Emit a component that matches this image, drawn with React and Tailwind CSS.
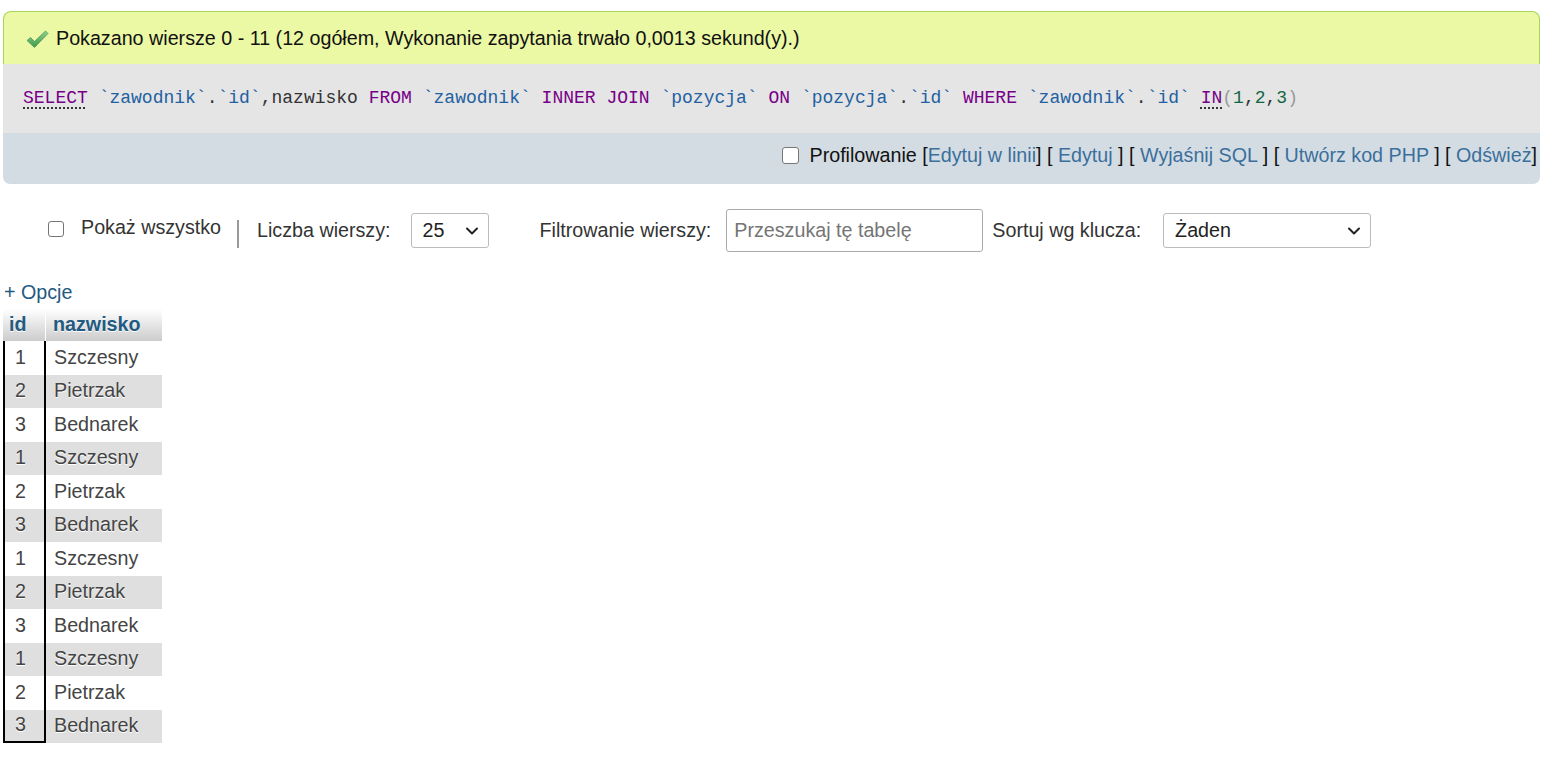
import React from "react";

const SANS = { fontFamily: '"Liberation Sans", Arial, sans-serif' };

function Check() {
  return (
    <svg width="23" height="20" viewBox="0 0 23 20" className="shrink-0">
      <defs>
        <linearGradient id="cg" x1="0" y1="0" x2="0" y2="1">
          <stop offset="0" stopColor="#8fd18f" />
          <stop offset="1" stopColor="#3e9a4a" />
        </linearGradient>
      </defs>
      <path d="M1 11.5 L4.5 8.5 L8.5 12.5 L19.5 2 L22 4.5 L8.5 18.5 Z" fill="url(#cg)" stroke="#4f9a55" strokeWidth="0.8" strokeLinejoin="round" />
    </svg>
  );
}

function Chevron() {
  return (
    <svg width="14" height="10" viewBox="0 0 14 10">
      <path d="M2 2.5 L7 7.5 L12 2.5" fill="none" stroke="#222" strokeWidth="2" strokeLinecap="round" strokeLinejoin="round" />
    </svg>
  );
}

const K = ({ children, u }) => (
  <span className={"text-[#770088]" + (u ? " underline decoration-dotted decoration-[#222] underline-offset-[5px]" : "")}>{children}</span>
);
const N = ({ children }) => <span className="text-[#2261a1]">{children}</span>;
const P = ({ children }) => <span className="text-[#333]">{children}</span>;

const rows = [
  [1, "Szczesny"], [2, "Pietrzak"], [3, "Bednarek"],
  [1, "Szczesny"], [2, "Pietrzak"], [3, "Bednarek"],
  [1, "Szczesny"], [2, "Pietrzak"], [3, "Bednarek"],
  [1, "Szczesny"], [2, "Pietrzak"], [3, "Bednarek"],
];

const L = ({ children }) => <span className="text-[#3b6f9c]">{children}</span>;

export default function App() {
  return (
    <div className="min-h-[762px] w-[1547px] bg-white text-[19.7px] text-[#111]" style={SANS}>
      {/* result box */}
      <div className="ml-[3px] w-[1537px] pt-[11px]">
        <div className="flex h-[53px] items-center rounded-t-[8px] border border-b-0 border-[#a9d65a] bg-[#ebf8a4] pl-[22px] pt-[2px]">
          <Check />
          <span className="ml-[7px] text-[#111]">Pokazano wiersze 0 - 11 (12 ogółem, Wykonanie zapytania trwało 0,0013 sekund(y).)</span>
        </div>
        <div className="flex h-[69px] items-center bg-[#e5e5e5] pl-[20px] text-[18px]" style={{ fontFamily: '"Liberation Mono", "DejaVu Sans Mono", monospace' }}>
          <span className="whitespace-pre">
            <K u>SELECT</K> <N>`zawodnik`</N><P>.</P><N>`id`</N><P>,nazwisko</P> <K>FROM</K> <N>`zawodnik`</N> <K>INNER</K> <K>JOIN</K> <N>`pozycja`</N> <K>ON</K> <N>`pozycja`</N><P>.</P><N>`id`</N> <K>WHERE</K> <N>`zawodnik`</N><P>.</P><N>`id`</N> <K u>IN</K><span className="text-[#999]">(</span><span className="text-[#116644]">1</span><P>,</P><span className="text-[#116644]">2</span><P>,</P><span className="text-[#116644]">3</span><span className="text-[#999]">)</span>
          </span>
        </div>
        <div className="flex h-[51px] items-center justify-end rounded-b-[7px] bg-[#d3dce3] pb-[6px] pr-[3px]">
          <span className="mr-[11px] inline-block h-[17px] w-[17px] rounded-[3px] border border-[#767676] bg-white" />
          <span className="whitespace-pre text-[#111]">
            Profilowanie [<L>Edytuj w linii</L>] [ <L>Edytuj</L> ] [ <L>Wyjaśnij SQL</L> ] [ <L>Utwórz kod PHP</L> ] [ <L>Odśwież</L>]
          </span>
        </div>
      </div>

      {/* controls row */}
      <div className="mt-[25px] flex h-[43px] items-center text-[#333]">
        <span className="ml-[48px] inline-block h-[16px] w-[16px] -translate-y-[2px] rounded-[3px] border border-[#767676] bg-white" />
        <span className="ml-[17px] -translate-y-[3px]">Pokaż wszystko</span>
        <span className="ml-[16px] inline-block h-[28px] w-[2px] translate-y-[3px] bg-[#999]" />
        <span className="ml-[18px]">Liczba wierszy:</span>
        <div className="ml-[20px] flex h-[35px] w-[78px] items-center justify-between rounded-[3px] border border-[#bbb] bg-white pl-[11px] pr-[9px]">
          <span className="text-[#222]">25</span>
          <Chevron />
        </div>
        <span className="ml-[51px]">Filtrowanie wierszy:</span>
        <input
          className="ml-[15px] h-[43px] w-[257px] rounded-[3px] border border-[#aaa] bg-white px-[7px] text-[19.7px] text-[#333] outline-none placeholder:text-[#757575]"
          style={SANS}
          placeholder="Przeszukaj tę tabelę"
        />
        <span className="ml-[9px]">Sortuj wg klucza:</span>
        <div className="ml-[22px] flex h-[35px] w-[208px] items-center justify-between rounded-[3px] border border-[#bbb] bg-white pl-[11px] pr-[9px]">
          <span className="text-[#222]">Żaden</span>
          <Chevron />
        </div>
      </div>

      {/* options */}
      <div className="mt-[28px] ml-[4px] leading-[24px] text-[#235a81]">+ Opcje</div>

      {/* table */}
      <div className="ml-[3px] mt-[5px] flex w-[159px] flex-col">
        <div className="flex h-[32px] font-bold text-[#235a81]" style={{ textShadow: "0 1px 0 #fff" }}>
          <div className="flex w-[42px] items-center bg-gradient-to-b from-white to-[#cccccc] pl-[6px]">id</div>
          <div className="ml-[1px] flex flex-1 items-center bg-gradient-to-b from-white to-[#cccccc] pl-[7px]">nazwisko</div>
        </div>
        {rows.map(([id, name], i) => (
          <div key={i} className={"flex h-[33.5px] text-[#444] " + (i % 2 === 1 ? "bg-[#dfdfdf]" : "bg-white")} style={{ textShadow: i % 2 === 1 ? "0 1px 0 #fff" : "none" }}>
            <div className={"flex w-[43px] items-center border-l-2 border-r-2 border-black pl-[10px] " + (i === rows.length - 1 ? "border-b-2" : "")}>{id}</div>
            <div className="flex flex-1 items-center pl-[8px]">{name}</div>
          </div>
        ))}
      </div>
    </div>
  );
}
